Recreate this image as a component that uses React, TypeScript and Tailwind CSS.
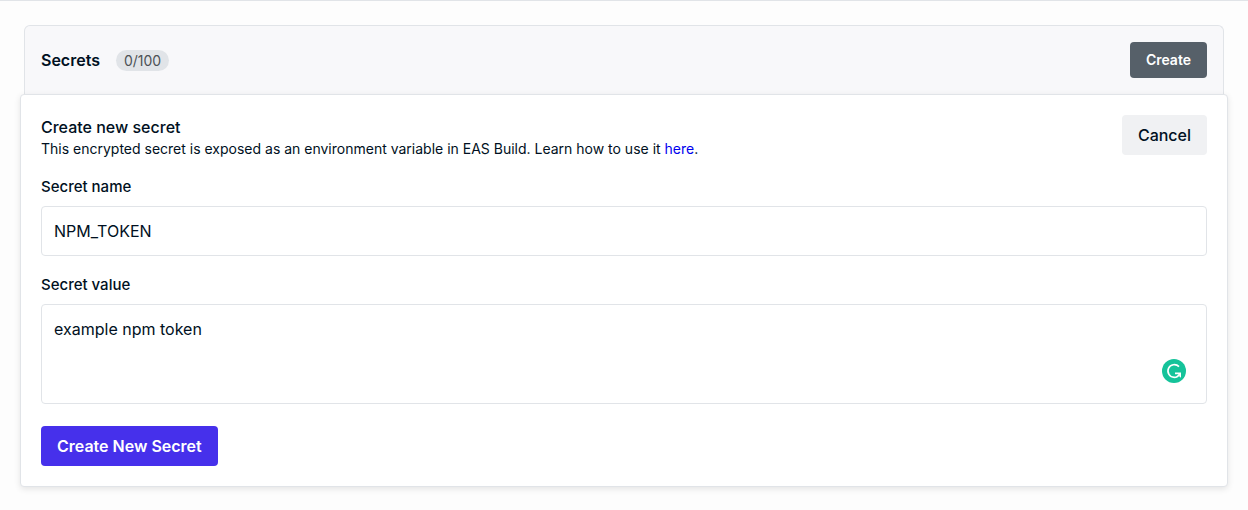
export default function App() {
  return (
    <main className="min-h-screen border-t border-[#e1e4e8] bg-[#fdfdfd] px-5 pt-6 pb-5 font-['Inter',sans-serif] text-[#001022]">
      <header className="mx-1 flex h-[69px] items-center justify-between rounded-t-md border border-b-0 border-[#e1e4e8] bg-[#f8f8fa] px-4">
        <div className="flex items-center gap-4">
          <h1 className="text-base font-semibold">Secrets</h1>
          <span className="rounded-full bg-[#e1e4e8] px-2 text-sm leading-[21px] text-[#4d5256]">0/100</span>
        </div>
        <button type="button" className="h-9 rounded bg-[#566069] px-4 text-sm font-semibold text-white">Create</button>
      </header>
      <form
        className="rounded border border-[#e1e4e8] bg-white p-5 shadow-[0_2px_6px_rgba(0,0,0,0.1)]"
        onSubmit={(e) => e.preventDefault()}
      >
        <div className="flex items-start justify-between">
          <div>
            <h2 className="text-base font-medium">Create new secret</h2>
            <p className="text-sm leading-[19px]">
              This encrypted secret is exposed as an environment variable in EAS Build. Learn how to use it{" "}
              <a href="#here" className="text-[#0000ee]">here</a>.
            </p>
          </div>
          <button type="button" className="h-10 rounded bg-[#f0f1f3] px-4 text-base font-medium">Cancel</button>
        </div>
        <label htmlFor="name" className="mt-[18px] block text-[15px] leading-[22px] font-medium">Secret name</label>
        <input id="name" defaultValue="NPM_TOKEN" className="mt-2 block h-[50px] w-full rounded border border-[#e1e4e8] bg-white px-3 text-base outline-none" />
        <label htmlFor="value" className="mt-[18px] block text-[15px] leading-[22px] font-medium">Secret value</label>
        <div className="relative mt-2">
          <textarea id="value" defaultValue="example npm token" className="block h-[100px] w-full resize-none rounded border border-[#e1e4e8] bg-white px-3 py-3 text-base outline-none" />
          <svg className="absolute right-[21px] bottom-[21px] size-6" viewBox="0 0 24 24" fill="none" aria-hidden="true">
            <circle cx="12" cy="12" r="12" fill="#15c39a" />
            <path d="M17 7.6A6.4 6.4 0 1 0 12.2 18.4C14.6 18.4 16.6 17 17.6 14.8" stroke="white" strokeWidth="1.6" />
            <path d="M13 13.6h6v5.2l-1.9-1.5 .4-2.1H13z" fill="white" />
          </svg>
        </div>
        <button type="submit" className="mt-[22px] h-10 rounded bg-[#4630eb] px-4 text-base font-semibold text-white">Create New Secret</button>
      </form>
    </main>
  );
}
